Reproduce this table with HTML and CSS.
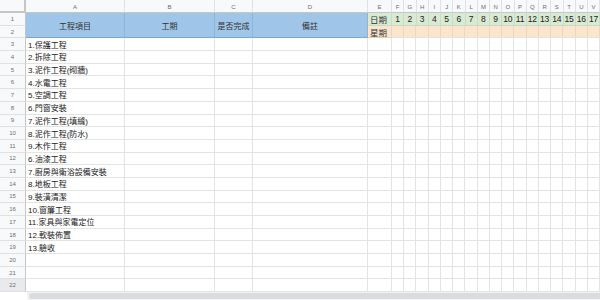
FILE: index.html
```html
<!DOCTYPE html>
<html lang="zh-Hant">
<head>
<meta charset="utf-8">
<title>工程進度表</title>
<link rel="stylesheet" href="styles.css">
</head>
<body>
<div class="sheet">
  <div class="corner"></div>
  <div class="ch">A</div><div class="ch">B</div><div class="ch">C</div><div class="ch">D</div><div class="ch">E</div>
  <div class="ch">F</div><div class="ch">G</div><div class="ch">H</div><div class="ch">I</div><div class="ch">J</div><div class="ch">K</div><div class="ch">L</div><div class="ch">M</div><div class="ch">N</div><div class="ch">O</div><div class="ch">P</div><div class="ch">Q</div><div class="ch">R</div><div class="ch">S</div><div class="ch">T</div><div class="ch">U</div><div class="ch">V</div>

  <div class="rh">1</div>
  <div class="hd">工程項目</div>
  <div class="hd">工期</div>
  <div class="hd">是否完成</div>
  <div class="hd">備註</div>
  <div class="c green lbl">日期</div>
  <div class="c green num">1</div><div class="c green num">2</div><div class="c green num">3</div><div class="c green num">4</div><div class="c green num">5</div><div class="c green num">6</div><div class="c green num">7</div><div class="c green num">8</div><div class="c green num">9</div><div class="c green num">10</div><div class="c green num">11</div><div class="c green num">12</div><div class="c green num">13</div><div class="c green num">14</div><div class="c green num">15</div><div class="c green num">16</div><div class="c green num">17</div>

  <div class="rh">2</div>
  <div class="c orange lbl">星期</div>
  <div class="dates orange"></div>

  <div class="rh">3</div><div class="c txt">1.保護工程</div><div class="c"></div><div class="c"></div><div class="c"></div><div class="c"></div><div class="dates"></div>
  <div class="rh">4</div><div class="c txt">2.拆除工程</div><div class="c"></div><div class="c"></div><div class="c"></div><div class="c"></div><div class="dates"></div>
  <div class="rh">5</div><div class="c txt">3.泥作工程(砌牆)</div><div class="c"></div><div class="c"></div><div class="c"></div><div class="c"></div><div class="dates"></div>
  <div class="rh">6</div><div class="c txt">4.水電工程</div><div class="c"></div><div class="c"></div><div class="c"></div><div class="c"></div><div class="dates"></div>
  <div class="rh">7</div><div class="c txt">5.空調工程</div><div class="c"></div><div class="c"></div><div class="c"></div><div class="c"></div><div class="dates"></div>
  <div class="rh">8</div><div class="c txt">6.門窗安裝</div><div class="c"></div><div class="c"></div><div class="c"></div><div class="c"></div><div class="dates"></div>
  <div class="rh">9</div><div class="c txt">7.泥作工程(填縫)</div><div class="c"></div><div class="c"></div><div class="c"></div><div class="c"></div><div class="dates"></div>
  <div class="rh">10</div><div class="c txt">8.泥作工程(防水)</div><div class="c"></div><div class="c"></div><div class="c"></div><div class="c"></div><div class="dates"></div>
  <div class="rh">11</div><div class="c txt">9.木作工程</div><div class="c"></div><div class="c"></div><div class="c"></div><div class="c"></div><div class="dates"></div>
  <div class="rh">12</div><div class="c txt">6.油漆工程</div><div class="c"></div><div class="c"></div><div class="c"></div><div class="c"></div><div class="dates"></div>
  <div class="rh">13</div><div class="c txt">7.廚房與衛浴設備安裝</div><div class="c"></div><div class="c"></div><div class="c"></div><div class="c"></div><div class="dates"></div>
  <div class="rh">14</div><div class="c txt">8.地板工程</div><div class="c"></div><div class="c"></div><div class="c"></div><div class="c"></div><div class="dates"></div>
  <div class="rh">15</div><div class="c txt">9.裝潢清潔</div><div class="c"></div><div class="c"></div><div class="c"></div><div class="c"></div><div class="dates"></div>
  <div class="rh">16</div><div class="c txt">10.窗簾工程</div><div class="c"></div><div class="c"></div><div class="c"></div><div class="c"></div><div class="dates"></div>
  <div class="rh">17</div><div class="c txt">11.家具與家電定位</div><div class="c"></div><div class="c"></div><div class="c"></div><div class="c"></div><div class="dates"></div>
  <div class="rh">18</div><div class="c txt">12.軟裝佈置</div><div class="c"></div><div class="c"></div><div class="c"></div><div class="c"></div><div class="dates"></div>
  <div class="rh">19</div><div class="c txt">13.驗收</div><div class="c"></div><div class="c"></div><div class="c"></div><div class="c"></div><div class="dates"></div>
  <div class="rh">20</div><div class="c"></div><div class="c"></div><div class="c"></div><div class="c"></div><div class="c"></div><div class="dates"></div>
  <div class="rh">21</div><div class="c"></div><div class="c"></div><div class="c"></div><div class="c"></div><div class="c"></div><div class="dates"></div>
  <div class="rh hover">22</div><div class="c"></div><div class="c"></div><div class="c"></div><div class="c"></div><div class="c"></div><div class="dates"></div>
</div>
<div class="hscroll"><div class="track"><div class="thumb"></div></div></div>
</body>
</html>
```
FILE: styles.css
```css
* { box-sizing: border-box; }
html, body {
  margin: 0;
  padding: 0;
  background: #ffffff;
  overflow: hidden;
  width: 600px;
  height: 300px;
}
body {
  font-family: "Liberation Sans", Arial, "Noto Sans CJK TC", sans-serif;
  color: #222;
}
.sheet {
  display: grid;
  grid-template-columns: 26px 99px 90px 38px 115px 24px repeat(17, 12.25px);
  grid-template-rows: 13px repeat(22, 12.7px);
  width: 600px;
  overflow: hidden;
}
.corner {
  background: #f8f9fa;
  border-right: 2px solid #c4c7c5;
  border-bottom: 2px solid #c4c7c5;
}
.ch {
  background: #f8f9fa;
  border-right: 1px solid #dfe1e3;
  border-bottom: 1px solid #c4c7c5;
  color: #6b6e72;
  font-size: 6px;
  display: flex;
  align-items: center;
  justify-content: center;
  padding-top: 1px;
}
.rh {
  background: #f8f9fa;
  border-right: 1px solid #c4c7c5;
  border-bottom: 1px solid #dfe1e3;
  color: #6b6e72;
  font-size: 6px;
  display: flex;
  align-items: center;
  justify-content: center;
}
.rh.hover { background: #e8eaed; }
.c {
  border-right: 1px solid #e2e3e3;
  border-bottom: 1px solid #e2e3e3;
  font-size: 8px;
  display: flex;
  align-items: center;
  white-space: nowrap;
  overflow: hidden;
}
.txt { padding-left: 2px; color: #222; }
.hd {
  grid-row: span 2;
  background: #9fc5e8;
  border-right: 1px solid #8fb4d6;
  border-bottom: 1px solid #7ea7cf;
  font-size: 8px;
  color: #333;
  display: flex;
  align-items: center;
  justify-content: center;
}
.green {
  background: #d9ead3;
  border-right-color: #cbdcc5;
  border-bottom-color: #c9dbc3;
}
.orange {
  background-color: #fce5cd;
  border-right-color: #ecd6bf;
  border-bottom: 1px solid #eccfae;
}
.lbl { padding-left: 2px; color: #333; font-size: 8.5px; }
.num { justify-content: center; color: #222; font-size: 8.5px; }
.dates {
  grid-column: span 17;
  border-bottom: 1px solid #e2e3e3;
  background-image: repeating-linear-gradient(to right, transparent 0, transparent 11.25px, #e2e3e3 11.25px, #e2e3e3 12.25px);
}
.dates.orange {
  background-image: repeating-linear-gradient(to right, transparent 0, transparent 11.25px, #ecd6bf 11.25px, #ecd6bf 12.25px);
}
.hscroll {
  height: 8px;
  display: flex;
  padding-left: 27px;
  background: #ffffff;
}
.track {
  flex: 1;
  background: #f1f3f4;
  padding-top: 1px;
}
.thumb {
  height: 6px;
  margin-left: 2px;
  background: #dadce0;
  border-radius: 3px 0 0 3px;
}
```
